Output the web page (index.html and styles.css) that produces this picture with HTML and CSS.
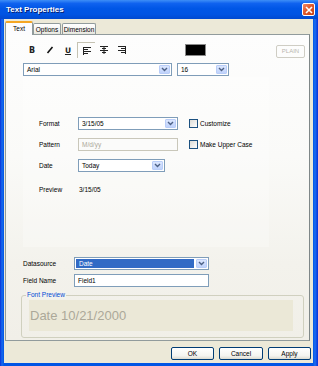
FILE: index.html
```html
<!DOCTYPE html>
<html>
<head>
<meta charset="utf-8">
<link rel="stylesheet" href="styles.css">
</head>
<body>
<div class="window">
  <div class="titlebar">
    <span class="title">Text Properties</span>
    <span class="close"><svg width="8" height="8" viewBox="0 0 8 8"><path d="M1 1L7 7M7 1L1 7" stroke="#fff" stroke-width="1.6"/></svg></span>
  </div>
  <div class="client">
    <div class="tabs">
      <div class="tab active">Text</div>
      <div class="tab">Options</div>
      <div class="tab wide">Dimension</div>
    </div>
    <div class="panel">
      <div class="toolbar">
        <div class="tbtn"><span class="g-b">B</span></div>
        <div class="tbtn"><svg width="8" height="8" viewBox="0 0 8 8"><path d="M6.5 1L1.5 7" stroke="#111" stroke-width="1.6"/></svg></div>
        <div class="tbtn"><span class="g-u">U</span></div>
        <div class="tbtn pressed"><svg width="8" height="8" viewBox="0 0 8 8"><path d="M0 0.5H8M0 2.5H5M0 4.5H8M0 6.5H5" stroke="#222" stroke-width="1"/><path d="M0.5 0V8" stroke="#222" stroke-width="1"/></svg></div>
        <div class="tbtn"><svg width="8" height="8" viewBox="0 0 8 8"><path d="M0 0.5H8M2 2.5H6M0 4.5H8M2 6.5H6" stroke="#222" stroke-width="1"/><path d="M4 0V8" stroke="#222" stroke-width="1"/></svg></div>
        <div class="tbtn"><svg width="8" height="8" viewBox="0 0 8 8"><path d="M0 0.5H8M3 2.5H8M0 4.5H8M3 6.5H8" stroke="#222" stroke-width="1"/><path d="M7.5 0V8" stroke="#222" stroke-width="1"/></svg></div>
        <div class="swatch"></div>
        <div class="plain">PLAIN</div>
      </div>
      <div class="fontrow">
        <div class="combo w-font"><span class="val">Arial</span><span class="arrow"><svg width="7" height="5" viewBox="0 0 7 5"><path d="M1 1L3.5 3.5L6 1" fill="none" stroke="#4d6185" stroke-width="1.4"/></svg></span></div>
        <div class="combo w-size"><span class="val">16</span><span class="arrow"><svg width="7" height="5" viewBox="0 0 7 5"><path d="M1 1L3.5 3.5L6 1" fill="none" stroke="#4d6185" stroke-width="1.4"/></svg></span></div>
      </div>
      <div class="formatbox">
        <div class="frow">
          <span class="flabel">Format</span>
          <div class="combo w-fmt"><span class="val">3/15/05</span><span class="arrow"><svg width="7" height="5" viewBox="0 0 7 5"><path d="M1 1L3.5 3.5L6 1" fill="none" stroke="#4d6185" stroke-width="1.4"/></svg></span></div>
          <span class="check"></span><span class="clabel">Customize</span>
        </div>
        <div class="frow r-pattern">
          <span class="flabel">Pattern</span>
          <div class="field disabled w-fmt">M/d/yy</div>
          <span class="check"></span><span class="clabel">Make Upper Case</span>
        </div>
        <div class="frow r-date">
          <span class="flabel">Date</span>
          <div class="combo w-date"><span class="val">Today</span><span class="arrow"><svg width="7" height="5" viewBox="0 0 7 5"><path d="M1 1L3.5 3.5L6 1" fill="none" stroke="#4d6185" stroke-width="1.4"/></svg></span></div>
        </div>
        <div class="frow r-preview">
          <span class="flabel">Preview</span>
          <span class="pval">3/15/05</span>
        </div>
      </div>
      <div class="drow">
        <span class="dlabel">Datasource</span>
        <div class="combo w-ds"><span class="val sel">Date</span><span class="arrow"><svg width="7" height="5" viewBox="0 0 7 5"><path d="M1 1L3.5 3.5L6 1" fill="none" stroke="#4d6185" stroke-width="1.4"/></svg></span></div>
      </div>
      <div class="drow r-field">
        <span class="dlabel">Field Name</span>
        <div class="field w-ds">Field1</div>
      </div>
      <div class="group">
        <span class="legend">Font Preview</span>
        <div class="previewbox">Date 10/21/2000</div>
      </div>
    </div>
    <div class="buttons">
      <div class="btn w-ok">OK</div>
      <div class="btn w-cancel">Cancel</div>
      <div class="btn w-apply">Apply</div>
    </div>
  </div>
</div>
</body>
</html>
```

FILE: styles.css
```css
* { box-sizing: border-box; }
html, body { margin: 0; padding: 0; }
body {
  width: 318px;
  height: 366px;
  overflow: hidden;
  font-family: "Liberation Sans", Arial, sans-serif;
  font-size: 6.5px;
  color: #000;
  background: #0054e3;
}
.window {
  width: 318px;
  height: 366px;
  display: flex;
  flex-direction: column;
  background: linear-gradient(to right, #0831d9 0, #166aee 2px, #0055e5 4px, #0055e5 313px, #1c6ef0 315px, #0831d9 318px);
}
.titlebar {
  height: 19px;
  flex: none;
  display: flex;
  align-items: center;
  justify-content: space-between;
  padding: 0 3px 0 6px;
  background: linear-gradient(to bottom, #3d8ef7 0%, #0f62ef 18%, #0056e6 45%, #0054e3 75%, #0049d0 100%);
}
.title {
  color: #fff;
  font-weight: bold;
  font-size: 8px;
  text-shadow: 1px 1px 0 #0a1e6e;
}
.close {
  width: 13px;
  height: 13px;
  border: 1px solid #fff;
  border-radius: 2px;
  background: linear-gradient(135deg, #f08a6a 0%, #e15a2c 45%, #c63f14 100%);
  display: flex;
  align-items: center;
  justify-content: center;
}
.client {
  flex: 1;
  margin: 0 5px 3px 4px;
  background: #ece9d8;
  display: flex;
  flex-direction: column;
}
.tabs {
  display: flex;
  align-items: flex-end;
  margin: 2px 0 -1px 1px;
  position: relative;
  z-index: 1;
  height: 14px;
}
.tab {
  width: 28px;
  height: 11px;
  margin-bottom: 1px;
  border: 1px solid #919b9c;
  border-bottom: none;
  border-radius: 2px 2px 0 0;
  background: linear-gradient(#ffffff, #f3f3ef 60%, #e6e5dd);
  display: flex;
  align-items: center;
  justify-content: center;
  font-size: 6.5px;
}
.tab.wide { width: 34px; margin-left: 1px; }
.tab.active {
  height: 14px;
  margin-bottom: 0;
  background: #fcfcfe;
  border-top: 2px solid #f5a623;
  padding-bottom: 2px;
}
.panel {
  margin-left: 1px;
  width: 305px;
  height: 307px;
  border: 1px solid #919b9c;
  border-right-color: #7f8788;
  background: linear-gradient(#fdfdfd 0%, #fafaf8 40%, #f3f2ec 75%, #f1efe8 100%);
  display: flex;
  flex-direction: column;
}
.toolbar {
  display: flex;
  align-items: center;
  margin-top: 7px;
  padding-left: 17px;
  height: 16px;
}
.tbtn {
  width: 18px;
  height: 16px;
  display: flex;
  align-items: center;
  justify-content: center;
}
.tbtn.pressed {
  border-left: 1px solid #c5c2b2;
  border-top: 1px solid #c5c2b2;
  padding: 1px 0 0 1px;
}
.g-b {
  font-family: "DejaVu Sans", sans-serif;
  font-weight: bold;
  font-size: 8px;
  color: #222;
}
.g-u {
  font-family: "DejaVu Sans", sans-serif;
  font-weight: bold;
  font-size: 7.5px;
  text-decoration: underline;
  color: #222;
}
.swatch {
  width: 21px;
  height: 12px;
  margin-left: 54px;
  border: 1px solid #8a8a8a;
  background: #000;
}
.plain {
  margin-left: 70px;
  width: 29px;
  height: 13px;
  border: 1px solid #cfcdc4;
  border-radius: 2px;
  color: #b8b6ad;
  font-size: 6px;
  display: flex;
  align-items: center;
  justify-content: center;
  margin-top: 2px;
}
.fontrow {
  display: flex;
  gap: 5px;
  margin-top: 5px;
  padding-left: 17px;
}
.combo {
  height: 13px;
  border: 1px solid #7f9db9;
  background: #fff;
  display: flex;
  align-items: stretch;
}
.combo .val {
  flex: 1;
  padding-left: 3px;
  display: flex;
  align-items: center;
}
.combo .val.sel {
  background: #316ac5;
  color: #fff;
  margin: 1px 1px 1px 1px;
}
.combo .arrow {
  width: 11px;
  margin: 1px;
  border: 1px solid #b9cdf8;
  border-radius: 1px;
  background: linear-gradient(#dbe6fe, #bfd2fb);
  display: flex;
  align-items: center;
  justify-content: center;
}
.w-font { width: 149px; }
.w-size { width: 52px; }
.w-fmt { width: 100px; }
.w-date { width: 87px; }
.w-ds { width: 135px; }
.formatbox {
  margin: 1px 0 0 17px;
  width: 246px;
  height: 170px;
  background: rgba(255, 255, 255, 0.25);
  padding: 40px 0 0 16px;
}
.frow {
  display: flex;
  align-items: center;
  height: 13px;
}
.r-pattern { margin-top: 8px; }
.r-date { margin-top: 8px; }
.r-preview { margin-top: 11px; }
.flabel { width: 39px; }
.pval { padding-left: 1px; }
.check {
  width: 9px;
  height: 9px;
  margin-left: 11px;
  border: 1px solid #1c5180;
  background: linear-gradient(135deg, #dcdcd7, #fdfdfd);
}
.clabel { margin-left: 2px; }
.field {
  height: 13px;
  border: 1px solid #7f9db9;
  background: #fff;
  padding-left: 3px;
  display: flex;
  align-items: center;
}
.field.disabled {
  border-color: #c9c7ba;
  background: #fbfbfa;
  color: #aca899;
}
.drow {
  display: flex;
  align-items: center;
  margin-top: 10px;
  padding-left: 17px;
}
.drow.r-field { margin-top: 4px; }
.dlabel { width: 51px; }
.group {
  position: relative;
  margin: 8px 0 0 15px;
  width: 283px;
  height: 43px;
  border: 1px solid #d0d0bf;
  border-radius: 3px;
  padding: 4px 10px 0 7px;
}
.legend {
  position: absolute;
  top: -5px;
  left: 4px;
  padding: 0 1px;
  color: #0046d5;
  background: #f3f2ec;
  line-height: 8px;
}
.previewbox {
  height: 31px;
  background: #ebe8d7;
  color: #aca899;
  font-size: 13px;
  display: flex;
  align-items: center;
  padding-left: 1px;
}
.buttons {
  display: flex;
  justify-content: flex-end;
  gap: 5px;
  margin: 6px 2px 0 0;
}
.btn {
  height: 13px;
  border: 1px solid #003c74;
  border-radius: 2px;
  background: linear-gradient(#ffffff, #f4f4f0 70%, #dcdad0);
  display: flex;
  align-items: center;
  justify-content: center;
  font-size: 6.5px;
}
.w-ok { width: 43px; }
.w-cancel { width: 44px; }
.w-apply { width: 43px; }
```
